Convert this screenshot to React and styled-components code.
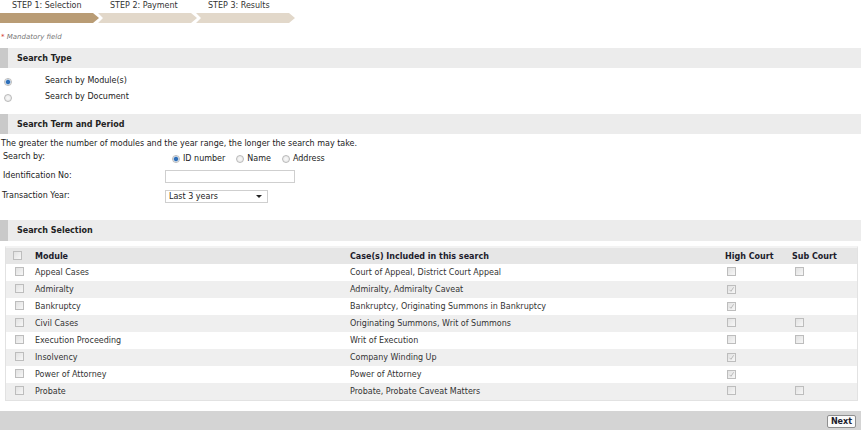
import React from "react";
import styled, { createGlobalStyle } from "styled-components";

const GlobalStyle = createGlobalStyle`
  html, body {
    margin: 0;
    padding: 0;
    background: #fff;
    font-family: "DejaVu Sans", Verdana, sans-serif;
    font-size: 8px;
    color: #222;
  }
`;

const Page = styled.div`
  width: 861px;
  height: 430px;
  overflow: hidden;
  display: flex;
  flex-direction: column;
`;

const Steps = styled.div`
  display: flex;
  padding-top: 1px;
`;

const Step = styled.div`
  width: 98px;
  display: flex;
  flex-direction: column;
  gap: 2px;
`;

const StepLabel = styled.div`
  height: 10px;
  line-height: 10px;
  padding-left: 12px;
  color: #333;
`;

const Chevron = styled.svg`
  display: block;
  width: 100px;
  height: 10px;
`;

const Mandatory = styled.div`
  margin-top: 10px;
  padding-left: 1px;
  font-size: 7px;
  font-style: italic;
  color: #777;
  span {
    color: #d0362b;
    font-style: normal;
  }
`;

const SectionHead = styled.div`
  margin-top: ${(p) => p.mt}px;
  height: ${(p) => p.h || 20}px;
  display: flex;
  align-items: center;
  background: #ececec;
  border-left: 8px solid #c9c9c9;
  padding-left: 9px;
  font-weight: bold;
  color: #222;
`;

const TypeList = styled.div`
  display: flex;
  flex-direction: column;
  gap: 4px;
  padding: 8px 0 0 4px;
`;

const TypeRow = styled.div`
  display: flex;
  align-items: center;
  height: 12px;
`;

const TypeLabel = styled.span`
  margin-left: 33px;
  margin-top: -3px;
`;

const Radio = styled.span`
  display: inline-block;
  width: 8px;
  height: 8px;
  border-radius: 50%;
  box-sizing: border-box;
  border: 1px solid #b9b9b9;
  background: ${(p) =>
    p.on
      ? "radial-gradient(circle, #2f6fb8 0 1.8px, #9ec0e6 2.3px, #f4f4f4 3px)"
      : "radial-gradient(circle, #fafafa 0, #e4e4e4 100%)"};
  flex-shrink: 0;
`;

const Note = styled.div`
  margin-top: 5px;
  padding-left: 1px;
  height: 10px;
  line-height: 10px;
`;

const FormGrid = styled.div`
  display: grid;
  grid-template-columns: 165px auto;
  row-gap: 7px;
  padding-left: 3px;
  margin-top: 3px;
`;

const FieldLabel = styled.div`
  margin-left: ${(p) => p.ml || 0}px;
  padding-top: ${(p) => p.pt || 0}px;
  line-height: 10px;
`;

const RadioGroup = styled.div`
  display: flex;
  align-items: center;
  padding-left: 4px;
  padding-top: 2px;
`;

const RadioOpt = styled.label`
  display: flex;
  align-items: center;
  gap: 3px;
  margin-right: 11px;
`;

const TextBox = styled.div`
  width: 130px;
  height: 13px;
  box-sizing: border-box;
  border: 1px solid #cfcfcf;
  background: #fff;
  margin-left: -3px;
`;

const Select = styled.div`
  width: 103px;
  height: 13px;
  box-sizing: border-box;
  border: 1px solid #cfcfcf;
  background: #fff;
  margin-left: -3px;
  display: flex;
  align-items: center;
  justify-content: space-between;
  padding: 0 5px 0 3px;
  &::after {
    content: "";
    border-left: 3px solid transparent;
    border-right: 3px solid transparent;
    border-top: 3px solid #222;
  }
`;

const TableWrap = styled.div`
  margin: 5px 3px 0 5px;
  border: 1px solid #e2e2e2;
  border-top: 2px solid #f3f3f3;
`;

const Row = styled.div`
  display: grid;
  grid-template-columns: 29px 315px 375px 67px 1fr;
  align-items: center;
  height: ${(p) => (p.head ? 16 : 17)}px;
  background: ${(p) => (p.head ? "#e6e6e6" : p.alt ? "#efefef" : "#fff")};
  font-weight: ${(p) => (p.head ? "bold" : "normal")};
  color: ${(p) => (p.head ? "#1c1c2c" : "#333")};
`;

const Cell = styled.div`
  padding-left: ${(p) => p.pl || 0}px;
  white-space: nowrap;
`;

const Box = styled.span`
  display: inline-flex;
  align-items: center;
  justify-content: center;
  width: 9px;
  height: 9px;
  box-sizing: border-box;
  border: 1px solid #bdbdbd;
  background: linear-gradient(135deg, #e2e2e2, #f7f7f7);
  svg {
    display: block;
  }
`;

const Footer = styled.div`
  margin-top: 10px;
  flex: 1;
  background: #d4d4d4;
  display: flex;
  justify-content: flex-end;
  align-items: flex-start;
  padding: 4px 5px 0 0;
`;

const NextButton = styled.button`
  font-family: "DejaVu Sans", Verdana, sans-serif;
  font-size: 8px;
  font-weight: bold;
  color: #1c1c2c;
  background: #fafafa;
  border: 1px solid #8f8f8f;
  border-radius: 2px;
  padding: 1px 3px;
  height: 13px;
  line-height: 9px;
`;

function Check({ checked }) {
  return (
    <Box>
      {checked && (
        <svg width="7" height="7" viewBox="0 0 7 7">
          <path d="M1.5 3.8 L3 5.3 L5.6 1.3" fill="none" stroke="#b4b4b4" strokeWidth="0.9" />
        </svg>
      )}
    </Box>
  );
}

const steps = ["STEP 1: Selection", "STEP 2: Payment", "STEP 3: Results"];

const modules = [
  { name: "Appeal Cases", cases: "Court of Appeal, District Court Appeal", high: false, sub: true },
  { name: "Admiralty", cases: "Admiralty, Admiralty Caveat", high: true, sub: null },
  { name: "Bankruptcy", cases: "Bankruptcy, Originating Summons in Bankruptcy", high: true, sub: null },
  { name: "Civil Cases", cases: "Originating Summons, Writ of Summons", high: false, sub: true },
  { name: "Execution Proceeding", cases: "Writ of Execution", high: false, sub: true },
  { name: "Insolvency", cases: "Company Winding Up", high: true, sub: null },
  { name: "Power of Attorney", cases: "Power of Attorney", high: true, sub: null },
  { name: "Probate", cases: "Probate, Probate Caveat Matters", high: false, sub: true },
];

export default function App() {
  return (
    <Page>
      <GlobalStyle />
      <Steps>
        {steps.map((s, i) => (
          <Step key={s}>
            <StepLabel>{s}</StepLabel>
            <Chevron viewBox="0 0 100 10">
              <polygon
                points={i === 0 ? "0,0 93,0 99,5 93,10 0,10" : "0,0 93,0 99,5 93,10 0,10 5,5"}
                fill={i === 0 ? "#b99c75" : "#e2d8ca"}
              />
            </Chevron>
          </Step>
        ))}
      </Steps>
      <Mandatory>
        <span>*</span> Mandatory field
      </Mandatory>

      <SectionHead mt={7}>Search Type</SectionHead>
      <TypeList>
        <TypeRow>
          <Radio on />
          <TypeLabel>Search by Module(s)</TypeLabel>
        </TypeRow>
        <TypeRow>
          <Radio />
          <TypeLabel>Search by Document</TypeLabel>
        </TypeRow>
      </TypeList>

      <SectionHead mt={10}>Search Term and Period</SectionHead>
      <Note>The greater the number of modules and the year range, the longer the search may take.</Note>
      <FormGrid>
        <FieldLabel>Search by:</FieldLabel>
        <RadioGroup>
          <RadioOpt>
            <Radio on />
            ID number
          </RadioOpt>
          <RadioOpt>
            <Radio />
            Name
          </RadioOpt>
          <RadioOpt>
            <Radio />
            Address
          </RadioOpt>
        </RadioGroup>
        <FieldLabel pt={1}>Identification No:</FieldLabel>
        <TextBox />
        <FieldLabel ml={-1} pt={1}>Transaction Year:</FieldLabel>
        <Select>Last 3 years</Select>
      </FormGrid>

      <SectionHead mt={17} h={21}>Search Selection</SectionHead>
      <TableWrap>
        <Row head>
          <Cell pl={7}>
            <Check />
          </Cell>
          <Cell>Module</Cell>
          <Cell>Case(s) Included in this search</Cell>
          <Cell>High Court</Cell>
          <Cell>Sub Court</Cell>
        </Row>
        {modules.map((m, i) => (
          <Row key={m.name} alt={i % 2 === 1}>
            <Cell pl={9}>
              <Check />
            </Cell>
            <Cell>{m.name}</Cell>
            <Cell>{m.cases}</Cell>
            <Cell pl={2}>
              <Check checked={m.high} />
            </Cell>
            <Cell pl={3}>{m.sub && <Check />}</Cell>
          </Row>
        ))}
      </TableWrap>

      <Footer>
        <NextButton>Next</NextButton>
      </Footer>
    </Page>
  );
}
